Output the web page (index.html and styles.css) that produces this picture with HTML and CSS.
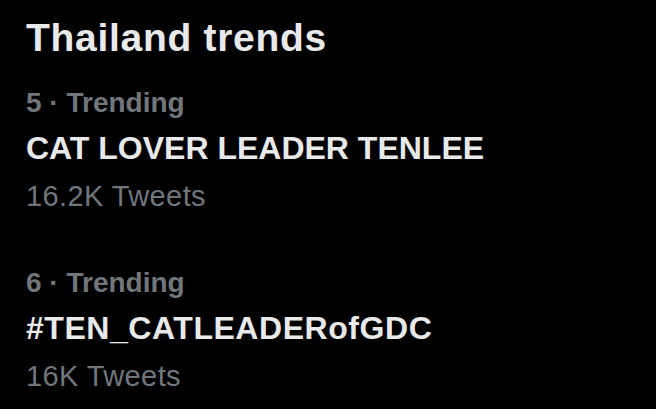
FILE: index.html
```html
<!DOCTYPE html>
<html lang="en">
<head>
    <meta charset="UTF-8">
    <meta name="viewport" content="width=device-width, initial-scale=1.0">
    <title>Thailand trends</title>
    <link rel="stylesheet" href="styles.css">
</head>
<body>
    <div class="trends">
        <h1 class="trends-title">Thailand trends</h1>

        <div class="trend-list">
            <div class="trend">
                <div class="trend-meta">5 · Trending</div>
                <div class="trend-name">CAT LOVER LEADER TENLEE</div>
                <div class="trend-count">16.2K Tweets</div>
            </div>

            <div class="trend">
                <div class="trend-meta">6 · Trending</div>
                <div class="trend-name tag">#TEN_CATLEADERofGDC</div>
                <div class="trend-count">16K Tweets</div>
            </div>
        </div>
    </div>
</body>
</html>
```

FILE: styles.css
```css
body {
    margin: 0;
    background: #000;
    font-family: "Liberation Sans", Arial, sans-serif;
    color: #e7e9ea;
}
.trends { padding: 14px 26px 0; }
.trends-title {
    margin: 0;
    font-size: 39px;
    line-height: 48px;
    font-weight: bold;
    letter-spacing: 0.7px;
}
.trend-list {
    margin-top: 23px;
    display: flex;
    flex-direction: column;
    gap: 51px;
}
.trend { display: flex; flex-direction: column; }
.trend-meta {
    font-size: 28px;
    line-height: 36px;
    font-weight: bold;
    color: #71767b;
}
.trend-name {
    margin: 7px 0 10px;
    font-size: 32px;
    line-height: 40px;
    font-weight: bold;
}
.trend-name.tag { letter-spacing: 0.55px; }
.trend-count {
    font-size: 29px;
    line-height: 36px;
    letter-spacing: 0.4px;
    color: #71767b;
}
```
